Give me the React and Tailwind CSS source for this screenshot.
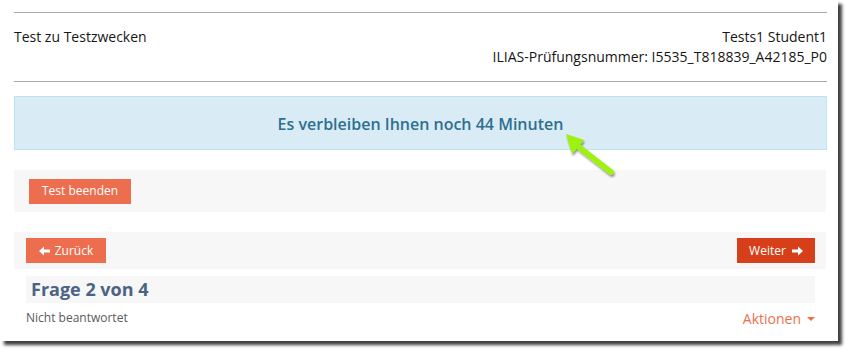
export default function App() {
  return (
    <div className="w-[850px] h-[352px] bg-white" style={{ fontFamily: '"Open Sans", "Liberation Sans", sans-serif' }}>
      <div className="relative w-[838px] h-[341px] bg-white shadow-[4px_4px_3px_rgba(0,0,0,0.75)] pl-[14px] pr-[11px] pt-[12px]">
        <div className="border-t border-b border-[#a9a9a9] pt-[14px] pb-[14px] flex justify-between text-[14px] leading-[20px] text-[#161616]">
          <div>Test zu Testzwecken</div>
          <div className="text-right">
            <div>Tests1 Student1</div>
            <div>ILIAS-Prüfungsnummer: I5535_T818839_A42185_P0</div>
          </div>
        </div>

        <div className="mt-[14px] h-[54px] bg-[#d9ecf5] border border-[#bde4ef] flex items-center justify-center text-[16px] font-semibold text-[#2f6f91] pt-[2px]">
          Es verbleiben Ihnen noch 44 Minuten
        </div>

        <div className="mt-[20px] mr-[1px] h-[42px] bg-[#f7f7f7] flex items-center px-[15px]">
          <button className="h-[25px] px-[13px] bg-[#ec6e4e] text-white text-[12px]">Test beenden</button>
        </div>

        <div className="mt-[20px] mr-[1px] h-[37px] bg-[#f7f7f7] flex items-center justify-between pl-[12px] pr-[11px]">
          <button className="h-[25px] w-[80px] bg-[#ec6e4e] text-white text-[12px] flex items-center justify-center gap-[5px]">
            <Arrow dir="left" />
            Zurück
          </button>
          <button className="h-[25px] w-[78px] bg-[#d63f19] text-white text-[12px] flex items-center justify-center gap-[6px]">
            Weiter
            <Arrow dir="right" />
          </button>
        </div>

        <div className="ml-[12px] mr-[12px] mt-[7px] h-[27px] bg-[#f7f7f7] flex items-center px-[5px]">
          <h2 className="text-[18px] font-bold text-[#4b6485]">Frage 2 von 4</h2>
        </div>

        <div className="ml-[12px] mr-[12px] mt-[5px] flex justify-between items-start">
          <div className="text-[12px] text-[#5a5a5a] leading-[20px]">Nicht beantwortet</div>
          <div className="mt-0 text-[14px] text-[#ee6e4e] flex items-center gap-[6px]">
            Aktionen
            <span className="w-0 h-0 border-l-[4px] border-r-[4px] border-t-[4px] border-l-transparent border-r-transparent border-t-[#ee6e4e]" />
          </div>
        </div>

        <svg className="absolute left-[560px] top-[128px]" width="64" height="54" viewBox="0 0 64 54">
          <defs>
            <filter id="sh" x="-20%" y="-20%" width="150%" height="150%">
              <feDropShadow dx="1" dy="2" stdDeviation="1.2" floodColor="#000" floodOpacity="0.45" />
            </filter>
          </defs>
          <g filter="url(#sh)">
            <line x1="15" y1="16" x2="51" y2="44" stroke="#9ef20c" strokeWidth="5.5" strokeLinecap="round" />
            <polygon points="6,6 24,12 12,26" fill="#9ef20c" />
          </g>
        </svg>
      </div>
    </div>
  )
}

function Arrow({ dir }) {
  return (
    <svg width="11" height="10" viewBox="0 0 11 10" style={{ transform: dir === 'left' ? 'scaleX(-1)' : undefined }}>
      <path d="M0 3.6h6V0.5L11 5 6 9.5V6.4H0z" fill="white" />
    </svg>
  )
}
